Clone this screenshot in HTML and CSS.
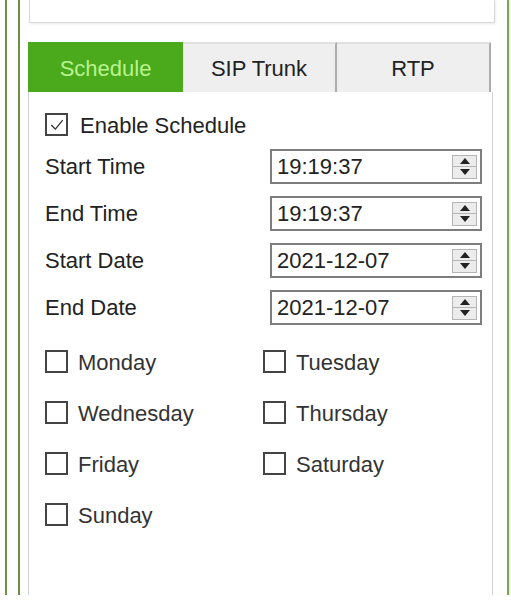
FILE: index.html
```html
<!DOCTYPE html>
<html>
<head>
<meta charset="utf-8">
<link rel="stylesheet" href="styles.css">
</head>
<body>
<div class="frame">
  <div class="inner">
    <div class="top-panel"></div>
    <div class="tabs">
      <div class="tab active">Schedule</div>
      <div class="tab">SIP Trunk</div>
      <div class="tab last">RTP</div>
    </div>
    <div class="content">
      <label class="check enable">
        <span class="box checked">
          <svg viewBox="0 0 22 22" width="18" height="18"><path d="M4 11 L9 16 L18 5" fill="none" stroke="#333" stroke-width="1.6"/></svg>
        </span>
        <span class="check-label">Enable Schedule</span>
      </label>
      <div class="form">
        <div class="row"><span class="label">Start Time</span><div class="field"><span class="value">19:19:37</span><span class="spin"><span class="up"></span><span class="down"></span></span></div></div>
        <div class="row"><span class="label">End Time</span><div class="field"><span class="value">19:19:37</span><span class="spin"><span class="up"></span><span class="down"></span></span></div></div>
        <div class="row"><span class="label">Start Date</span><div class="field"><span class="value">2021-12-07</span><span class="spin"><span class="up"></span><span class="down"></span></span></div></div>
        <div class="row"><span class="label">End Date</span><div class="field"><span class="value">2021-12-07</span><span class="spin"><span class="up"></span><span class="down"></span></span></div></div>
      </div>
      <div class="days">
        <label class="check day"><span class="box"></span><span class="check-label">Monday</span></label>
        <label class="check day"><span class="box"></span><span class="check-label">Tuesday</span></label>
        <label class="check day"><span class="box"></span><span class="check-label">Wednesday</span></label>
        <label class="check day"><span class="box"></span><span class="check-label">Thursday</span></label>
        <label class="check day"><span class="box"></span><span class="check-label">Friday</span></label>
        <label class="check day"><span class="box"></span><span class="check-label">Saturday</span></label>
        <label class="check day"><span class="box"></span><span class="check-label">Sunday</span></label>
      </div>
    </div>
  </div>
</div>
</body>
</html>
```
FILE: styles.css
```css
* { box-sizing: border-box; }
html, body { margin: 0; padding: 0; background: #fff; }
body {
  font-family: "Liberation Sans", Arial, sans-serif;
  font-size: 22px;
  color: #222;
}
.frame {
  margin-left: 5px;
  width: 504px;
  height: 595px;
  border-left: 2px solid #6f8f45;
  border-right: 2px solid #7aa552;
  box-shadow: 1px 0 2px rgba(140, 190, 110, 0.35);
}
.inner {
  margin-left: 11px;
  height: 100%;
  border-left: 2px solid #6f8f45;
  padding-left: 8px;
  display: flex;
  flex-direction: column;
}
.top-panel {
  width: 466px;
  margin-left: 1px;
  height: 23px;
  border: 1px solid #d8d8d8;
  border-top: none;
  box-shadow: 1px 1px 2px rgba(0, 0, 0, 0.08);
  background: #fff;
  flex: none;
}
.tabs {
  margin-top: 19px;
  display: flex;
  width: 463px;
  height: 50px;
  flex: none;
}
.tab {
  width: 154px;
  display: flex;
  align-items: center;
  justify-content: center;
  background: #efefef;
  border-top: 2px solid #e0e0e0;
  border-right: 2px solid #acacac;
  color: #222;
  padding-top: 2px;
}
.tab.active {
  width: 155px;
  background: #4aaa1c;
  color: #b9f290;
  border-top: 2px solid #4aaa1c;
  border-right: none;
}
.tab.last { width: 154px; }
.content {
  flex: 1;
  width: 465px;
  border-left: 1px solid #d2d2d2;
  border-right: 1px solid #d2d2d2;
  padding: 21px 0 0 16px;
}
.check {
  display: flex;
  align-items: center;
  height: 23px;
}
.box {
  width: 23px;
  height: 23px;
  border: 2px solid #444;
  flex: none;
  display: flex;
  align-items: center;
  justify-content: center;
  background: #fff;
}
.check-label { margin-left: 10px; padding-top: 2px; }
.enable .check-label { margin-left: 12px; }
.form {
  margin-top: 13px;
  display: flex;
  flex-direction: column;
  gap: 12px;
}
.row {
  display: flex;
  align-items: center;
  height: 35px;
}
.label { width: 225px; padding-top: 1px; }
.field {
  width: 212px;
  height: 35px;
  border: 2px solid #7d7d7d;
  display: flex;
  align-items: center;
  justify-content: space-between;
  padding: 0 3px 0 5px;
}
.spin {
  width: 25px;
  height: 24px;
  border: 1px solid #b5b5b5;
  background: #ececec;
  display: flex;
  flex-direction: column;
}
.up, .down {
  flex: 1;
  display: flex;
  align-items: center;
  justify-content: center;
}
.up { border-bottom: 1px solid #b5b5b5; }
.up::before {
  content: "";
  border-left: 5px solid transparent;
  border-right: 5px solid transparent;
  border-bottom: 6px solid #222;
}
.down::before {
  content: "";
  border-left: 5px solid transparent;
  border-right: 5px solid transparent;
  border-top: 6px solid #222;
}
.days {
  margin-top: 25px;
  display: grid;
  grid-template-columns: 218px 218px;
  row-gap: 28px;
}
.day { color: #333; }
```
